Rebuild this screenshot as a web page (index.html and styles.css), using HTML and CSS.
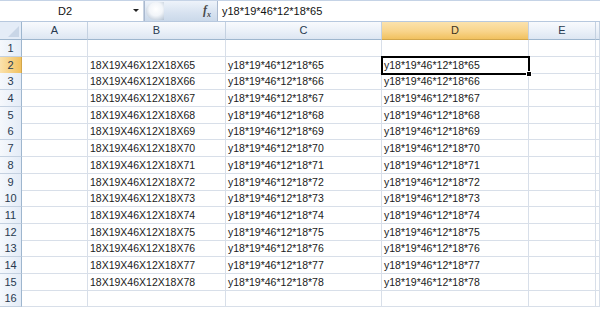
FILE: index.html
```html
<!DOCTYPE html>
<html>
<head>
<meta charset="utf-8">
<link rel="stylesheet" href="styles.css">
</head>
<body>
<div class="fbar">
  <div class="namebox"><span class="ref">D2</span><span class="arrow"></span></div>
  <div class="fxzone"><span class="knob"></span><span class="fx">f<sub>x</sub></span></div>
  <div class="formula">y18*19*46*12*18*65</div>
</div>
<div class="sheet">
  <div class="row head">
    <div class="corner"><span class="tri"></span></div>
    <div class="ch">A</div><div class="ch">B</div><div class="ch">C</div><div class="ch sel">D</div><div class="ch">E</div><div class="ch"></div>
  </div>
  <div class="row"><div class="rh">1</div><div class="c"></div><div class="c"></div><div class="c"></div><div class="c"></div><div class="c"></div><div class="c"></div></div>
  <div class="row"><div class="rh sel">2</div><div class="c"></div><div class="c">18X19X46X12X18X65</div><div class="c">y18*19*46*12*18*65</div><div class="c active">y18*19*46*12*18*65<span class="handle"></span></div><div class="c"></div><div class="c"></div></div>
  <div class="row"><div class="rh">3</div><div class="c"></div><div class="c">18X19X46X12X18X66</div><div class="c">y18*19*46*12*18*66</div><div class="c">y18*19*46*12*18*66</div><div class="c"></div><div class="c"></div></div>
  <div class="row"><div class="rh">4</div><div class="c"></div><div class="c">18X19X46X12X18X67</div><div class="c">y18*19*46*12*18*67</div><div class="c">y18*19*46*12*18*67</div><div class="c"></div><div class="c"></div></div>
  <div class="row"><div class="rh">5</div><div class="c"></div><div class="c">18X19X46X12X18X68</div><div class="c">y18*19*46*12*18*68</div><div class="c">y18*19*46*12*18*68</div><div class="c"></div><div class="c"></div></div>
  <div class="row"><div class="rh">6</div><div class="c"></div><div class="c">18X19X46X12X18X69</div><div class="c">y18*19*46*12*18*69</div><div class="c">y18*19*46*12*18*69</div><div class="c"></div><div class="c"></div></div>
  <div class="row"><div class="rh">7</div><div class="c"></div><div class="c">18X19X46X12X18X70</div><div class="c">y18*19*46*12*18*70</div><div class="c">y18*19*46*12*18*70</div><div class="c"></div><div class="c"></div></div>
  <div class="row"><div class="rh">8</div><div class="c"></div><div class="c">18X19X46X12X18X71</div><div class="c">y18*19*46*12*18*71</div><div class="c">y18*19*46*12*18*71</div><div class="c"></div><div class="c"></div></div>
  <div class="row"><div class="rh">9</div><div class="c"></div><div class="c">18X19X46X12X18X72</div><div class="c">y18*19*46*12*18*72</div><div class="c">y18*19*46*12*18*72</div><div class="c"></div><div class="c"></div></div>
  <div class="row"><div class="rh">10</div><div class="c"></div><div class="c">18X19X46X12X18X73</div><div class="c">y18*19*46*12*18*73</div><div class="c">y18*19*46*12*18*73</div><div class="c"></div><div class="c"></div></div>
  <div class="row"><div class="rh">11</div><div class="c"></div><div class="c">18X19X46X12X18X74</div><div class="c">y18*19*46*12*18*74</div><div class="c">y18*19*46*12*18*74</div><div class="c"></div><div class="c"></div></div>
  <div class="row"><div class="rh">12</div><div class="c"></div><div class="c">18X19X46X12X18X75</div><div class="c">y18*19*46*12*18*75</div><div class="c">y18*19*46*12*18*75</div><div class="c"></div><div class="c"></div></div>
  <div class="row"><div class="rh">13</div><div class="c"></div><div class="c">18X19X46X12X18X76</div><div class="c">y18*19*46*12*18*76</div><div class="c">y18*19*46*12*18*76</div><div class="c"></div><div class="c"></div></div>
  <div class="row"><div class="rh">14</div><div class="c"></div><div class="c">18X19X46X12X18X77</div><div class="c">y18*19*46*12*18*77</div><div class="c">y18*19*46*12*18*77</div><div class="c"></div><div class="c"></div></div>
  <div class="row"><div class="rh">15</div><div class="c"></div><div class="c">18X19X46X12X18X78</div><div class="c">y18*19*46*12*18*78</div><div class="c">y18*19*46*12*18*78</div><div class="c"></div><div class="c"></div></div>
  <div class="row"><div class="rh">16</div><div class="c"></div><div class="c"></div><div class="c"></div><div class="c"></div><div class="c"></div><div class="c"></div></div>
</div>
</body>
</html>
```

FILE: styles.css
```css
* { box-sizing: border-box; }
html, body {
  margin: 0;
  padding: 0;
  background: #ffffff;
  width: 600px;
  height: 310px;
  overflow: hidden;
  font-family: "Liberation Sans", Arial, sans-serif;
  font-size: 10.5px;
  color: #1a1a1a;
}

/* formula bar */
.fbar {
  display: flex;
  height: 22px;
  background: #ffffff;
  border-bottom: 1px solid #b7c8de;
  border-top: 1px solid #c5d3e6;
}
.namebox {
  width: 144px;
  position: relative;
  display: flex;
  align-items: center;
  border-right: 1px solid #c9d4e2;
}
.ref {
  width: 130px;
  text-align: center;
  font-size: 11px;
  color: #111;
}
.arrow {
  position: absolute;
  left: 133px;
  top: 8px;
  width: 0;
  height: 0;
  border-left: 3px solid transparent;
  border-right: 3px solid transparent;
  border-top: 3px solid #222;
}
.fxzone {
  width: 74px;
  position: relative;
  background: linear-gradient(#eef3fa, #d7e2f0 60%, #cbd9ea);
  border-left: 1px solid #aab9cf;
  border-right: 1px solid #aab9cf;
  display: flex;
  align-items: center;
  justify-content: flex-end;
  padding-right: 6px;
}
.knob {
  position: absolute;
  left: 1px;
  top: 1px;
  width: 18px;
  height: 18px;
  border-radius: 50% 0 0 50%;
  background: radial-gradient(circle at 55% 40%, #ffffff 0, #f2f5f9 45%, #c4cfdc 80%, #a9b6c8 100%);
}
.fx {
  font-family: "Liberation Serif", "Times New Roman", serif;
  font-style: italic;
  font-weight: bold;
  font-size: 12px;
  color: #4a4a4a;
}
.fx sub { font-size: 8px; }
.formula {
  flex: 1;
  display: flex;
  align-items: center;
  padding-left: 4px;
  font-size: 11px;
  color: #111;
}

/* sheet */
.sheet {
  display: flex;
  flex-direction: column;
}
.row {
  display: grid;
  grid-template-columns: 22px 66px 138px 156px 147px 67px 1fr;
  height: 16.7px;
}
.row.head {
  height: 18px;
}
.corner, .ch {
  background: linear-gradient(#f8fafd, #eaf0f8 55%, #dde6f2);
  border-right: 1px solid #c4d1e1;
  border-bottom: 1px solid #9eb6ce;
  color: #27394f;
  text-align: center;
  font-size: 11px;
  line-height: 17px;
}
.corner {
  position: relative;
  background: #e4ecf7;
  border-right: 1px solid #9eb6ce;
}
.tri {
  position: absolute;
  right: 2px;
  bottom: 2px;
  width: 0;
  height: 0;
  border-left: 11px solid transparent;
  border-bottom: 11px solid #c9d6e7;
}
.ch.sel {
  background: linear-gradient(#fbe2ad, #f8d48b 55%, #f1c15f);
  border-bottom: 1px solid #d2a64b;
  color: #3a3220;
}
.rh {
  background: linear-gradient(90deg, #f5f8fc, #e4ecf7);
  border-right: 1px solid #9eb6ce;
  border-bottom: 1px solid #c4d1e1;
  color: #27394f;
  text-align: center;
  font-size: 11px;
  line-height: 16px;
}
.rh.sel {
  background: linear-gradient(90deg, #fbe2ad, #f1c15f);
  border-right: 1px solid #d2a64b;
}
.c {
  border-right: 1px solid #d8dfe9;
  border-bottom: 1px solid #d8dfe9;
  padding-left: 2px;
  line-height: 16px;
  white-space: nowrap;
  overflow: visible;
}
.c.active {
  position: relative;
  outline: 2px solid #000;
  outline-offset: -1px;
}
.handle {
  position: absolute;
  right: -4px;
  bottom: -4px;
  width: 6px;
  height: 6px;
  background: #000;
  border: 1px solid #fff;
}
```
